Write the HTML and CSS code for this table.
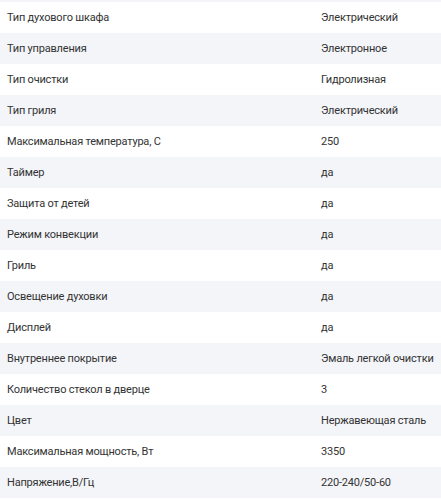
FILE: index.html
```html
<!DOCTYPE html>
<html lang="ru">
<head>
<meta charset="utf-8">
<link rel="stylesheet" href="styles.css">
</head>
<body>
<div class="specs">
  <div class="row row-top"></div>
  <div class="row"><span class="label">Тип духового шкафа</span><span class="value">Электрический</span></div>
  <div class="row"><span class="label">Тип управления</span><span class="value">Электронное</span></div>
  <div class="row"><span class="label">Тип очистки</span><span class="value">Гидролизная</span></div>
  <div class="row"><span class="label">Тип гриля</span><span class="value">Электрический</span></div>
  <div class="row"><span class="label">Максимальная температура, С</span><span class="value">250</span></div>
  <div class="row"><span class="label">Таймер</span><span class="value">да</span></div>
  <div class="row"><span class="label">Защита от детей</span><span class="value">да</span></div>
  <div class="row"><span class="label">Режим конвекции</span><span class="value">да</span></div>
  <div class="row"><span class="label">Гриль</span><span class="value">да</span></div>
  <div class="row"><span class="label">Освещение духовки</span><span class="value">да</span></div>
  <div class="row"><span class="label">Дисплей</span><span class="value">да</span></div>
  <div class="row"><span class="label">Внутреннее покрытие</span><span class="value">Эмаль легкой очистки</span></div>
  <div class="row"><span class="label">Количество стекол в дверце</span><span class="value">3</span></div>
  <div class="row"><span class="label">Цвет</span><span class="value">Нержавеющая сталь</span></div>
  <div class="row"><span class="label">Максимальная мощность, Вт</span><span class="value">3350</span></div>
  <div class="row"><span class="label">Напряжение,В/Гц</span><span class="value">220-240/50-60</span></div>
</div>
</body>
</html>
```
FILE: styles.css
```css
html, body {
  margin: 0;
  padding: 0;
  background: #ffffff;
}
body {
  font-family: Roboto, "Noto Sans", sans-serif;
  font-size: 11px;
  letter-spacing: -0.2px;
  color: #333333;
}
.specs {
  display: flex;
  flex-direction: column;
}
.row {
  display: grid;
  grid-template-columns: 314px 1fr;
  align-items: center;
  height: 31px;
  padding-left: 7px;
  background: #ffffff;
}
.row:nth-child(odd) {
  background: #f4f5f9;
}
.row-top {
  height: 2px;
}
.label, .value {
  white-space: nowrap;
}
```
